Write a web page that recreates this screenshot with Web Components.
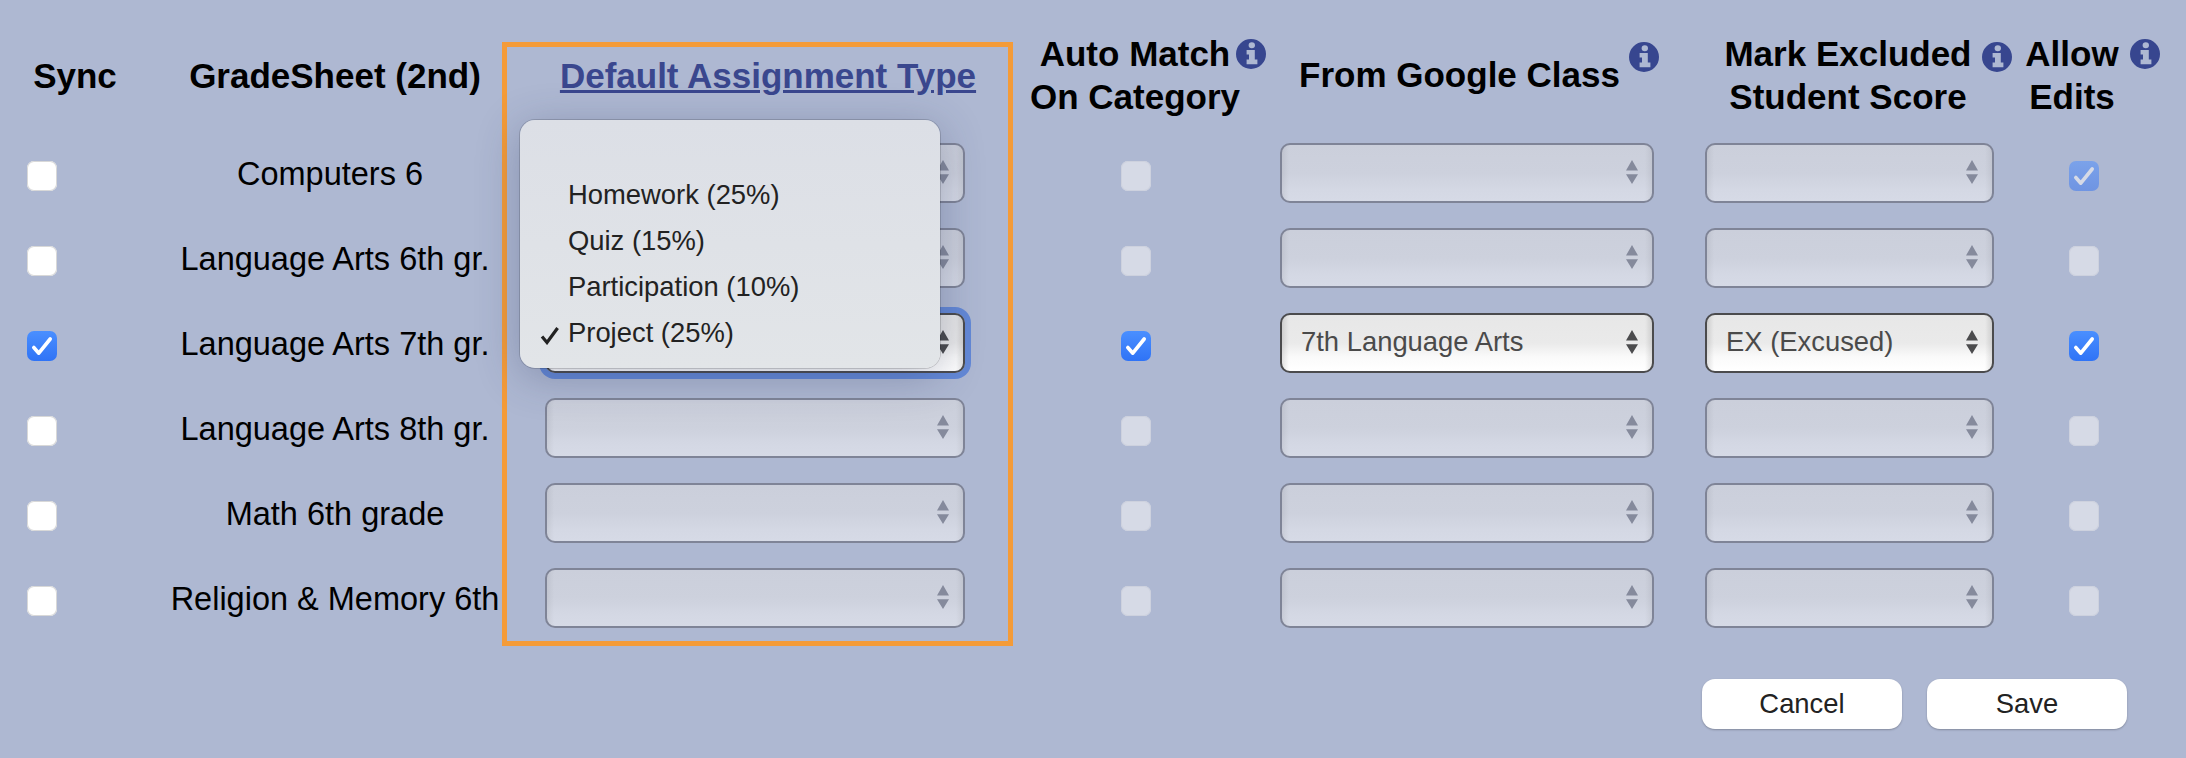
<!DOCTYPE html>
<html>
<head>
<meta charset="utf-8">
<title>Sync</title>
<style>
    html, body { margin: 0; height: 100%; background: #aeb8d2; }
    body { font-family: "Liberation Sans", Arial, sans-serif; overflow: hidden; }
</style>
</head>
<body>
<sync-form>
    <grade-column style="width:168px;--inset:27px">
        <column-head single style="width:150px">Sync</column-head>
        <grade-check></grade-check>
        <grade-check></grade-check>
        <grade-check checked></grade-check>
        <grade-check></grade-check>
        <grade-check></grade-check>
        <grade-check></grade-check>
    </grade-column>
    <grade-column style="width:334px">
        <column-head single>GradeSheet (2nd)</column-head>
        <row-name style="padding-right:10px">Computers 6</row-name>
        <row-name>Language Arts 6th gr.</row-name>
        <row-name>Language Arts 7th gr.</row-name>
        <row-name>Language Arts 8th gr.</row-name>
        <row-name>Math 6th grade</row-name>
        <row-name>Religion &amp; Memory 6th</row-name>
    </grade-column>
    <grade-column framed style="width:511px;--inset:38px;--select-w:420px">
        <column-head single link style="padding-left:21px">Default Assignment Type</column-head>
        <grade-select disabled></grade-select>
        <grade-select disabled></grade-select>
        <grade-select focused></grade-select>
        <grade-select disabled></grade-select>
        <grade-select disabled></grade-select>
        <grade-select disabled></grade-select>
        <type-menu>
            <menu-item></menu-item>
            <menu-item>Homework (25%)</menu-item>
            <menu-item>Quiz (15%)</menu-item>
            <menu-item>Participation (10%)</menu-item>
            <menu-item checked>Project (25%)</menu-item>
        </type-menu>
    </grade-column>
    <grade-column style="width:244px;--inset:108px">
        <column-head>Auto Match<info-dot style="--drop:-2.6px;--gap:6px"></info-dot><br>On Category</column-head>
        <grade-check disabled></grade-check>
        <grade-check disabled></grade-check>
        <grade-check checked></grade-check>
        <grade-check disabled></grade-check>
        <grade-check disabled></grade-check>
        <grade-check disabled></grade-check>
    </grade-column>
    <grade-column style="width:423px;--inset:23px;--select-w:374px">
        <column-head style="padding:9.5px 18px 0 0">From Google Class<info-dot style="--drop:15px;--gap:9px"></info-dot></column-head>
        <grade-select disabled></grade-select>
        <grade-select disabled></grade-select>
        <grade-select>7th Language Arts</grade-select>
        <grade-select disabled></grade-select>
        <grade-select disabled></grade-select>
        <grade-select disabled></grade-select>
    </grade-column>
    <grade-column style="width:336px;--inset:25px;--select-w:289px">
        <column-head>Mark Excluded<info-dot style="--drop:-5.6px;--gap:10px"></info-dot><br>Student Score</column-head>
        <grade-select disabled></grade-select>
        <grade-select disabled></grade-select>
        <grade-select>EX (Excused)</grade-select>
        <grade-select disabled></grade-select>
        <grade-select disabled></grade-select>
        <grade-select disabled></grade-select>
    </grade-column>
    <grade-column style="width:170px;--inset:53px">
        <column-head style="width:112px">Allow<info-dot style="--drop:-2.6px;--gap:11px"></info-dot><br>Edits</column-head>
        <grade-check checked disabled></grade-check>
        <grade-check disabled></grade-check>
        <grade-check checked></grade-check>
        <grade-check disabled></grade-check>
        <grade-check disabled></grade-check>
        <grade-check disabled></grade-check>
    </grade-column>
    <form-button slot="actions">Cancel</form-button>
    <form-button slot="actions">Save</form-button>
</sync-form>

<script>
class SyncForm extends HTMLElement {
    constructor() {
        super();
        const shadow = this.attachShadow({mode: 'open'});
        shadow.innerHTML = `
            <style>
                :host { display: block; padding-top: 32px; }
                .columns { display: flex; align-items: flex-start; }
                .actions {
                    display: flex;
                    justify-content: flex-end;
                    gap: 25px;
                    margin-top: 33px;
                    padding-right: 59px;
                }
            </style>
            <div class="columns"><slot></slot></div>
            <div class="actions"><slot name="actions"></slot></div>
        `;
    }
}

class GradeColumn extends HTMLElement {
    constructor() {
        super();
        const shadow = this.attachShadow({mode: 'open'});
        shadow.innerHTML = `
            <style>
                :host {
                    display: grid;
                    flex: none;
                    box-sizing: border-box;
                    position: relative;
                    grid-template-rows: 98.5px repeat(6, 85px);
                    align-items: center;
                }
                :host([framed]) {
                    margin-top: 10px;
                    border: 5px solid #f49b38;
                    grid-template-rows: 83.5px repeat(6, 85px);
                    --head-top: 6.5px;
                }
            </style>
            <slot></slot>
        `;
    }
}

class ColumnHead extends HTMLElement {
    constructor() {
        super();
        const shadow = this.attachShadow({mode: 'open'});
        shadow.innerHTML = `
            <style>
                :host {
                    display: block;
                    align-self: start;
                    box-sizing: border-box;
                    margin-top: var(--head-top, 0);
                    font-weight: bold;
                    font-size: 35px;
                    line-height: 43px;
                    text-align: center;
                    white-space: nowrap;
                    color: #000;
                }
                :host([single]) { padding-top: 21.5px; }
                :host([link]) {
                    padding-top: 0;
                    color: #3a478e;
                    text-decoration: underline;
                }
            </style>
            <slot></slot>
        `;
    }
}

class InfoDot extends HTMLElement {
    constructor() {
        super();
        const shadow = this.attachShadow({mode: 'open'});
        shadow.innerHTML = `
            <style>
                :host {
                    display: inline-block;
                    width: 30px;
                    height: 30px;
                    margin-left: var(--gap, 6px);
                    margin-right: calc(-30px - var(--gap, 6px));
                    vertical-align: var(--drop, 0);
                }
                svg { display: block; }
            </style>
            <svg width="30" height="30" viewBox="0 0 30 30">
                <path fill="#37468f" fill-rule="evenodd" d="M15 0a15 15 0 1 0 0 30a15 15 0 1 0 0-30zM15.8 3.2a3.2 3 0 1 1 0 6a3.2 3 0 1 1 0-6zM10.6 11h8.2v9.6h2.6v4.6H10.6v-4.6h2.4v-5h-2.4z"/>
            </svg>
        `;
    }
}

class RowName extends HTMLElement {
    constructor() {
        super();
        const shadow = this.attachShadow({mode: 'open'});
        shadow.innerHTML = `
            <style>
                :host {
                    display: block;
                    margin-top: 1px;
                    font-size: 32.5px;
                    line-height: 40px;
                    text-align: center;
                    white-space: nowrap;
                    color: #000;
                }
            </style>
            <slot></slot>
        `;
    }
}

class GradeCheck extends HTMLElement {
    constructor() {
        super();
        const shadow = this.attachShadow({mode: 'open'});
        shadow.innerHTML = `
            <style>
                :host {
                    display: block;
                    box-sizing: border-box;
                    width: 30px;
                    height: 30px;
                    margin: 6px 0 0 var(--inset, 0);
                    border-radius: 7px;
                    background: #fff;
                    box-shadow: inset 0 0 0 1px #d8d8d8;
                    filter: blur(.4px);
                }
                :host([disabled]) {
                    background: #d6dae6;
                    box-shadow: inset 0 0 0 1px #cdd1de;
                }
                :host([checked]) {
                    background: linear-gradient(#4a8fff, #2f73f6);
                    box-shadow: none;
                    filter: none;
                }
                :host([checked][disabled]) {
                    background: linear-gradient(#7ba2ea, #6f94e2);
                }
                svg { display: none; }
                :host([checked]) svg { display: block; }
                :host([checked][disabled]) path { stroke: #d6dae6; }
            </style>
            <svg width="30" height="30" viewBox="0 0 30 30">
                <path d="M6.8 16.5l5 5.7L23.2 8" fill="none" stroke="#fff" stroke-width="3.6" stroke-linecap="round" stroke-linejoin="round"/>
            </svg>
        `;
    }
}

class GradeSelect extends HTMLElement {
    constructor() {
        super();
        const shadow = this.attachShadow({mode: 'open'});
        shadow.innerHTML = `
            <style>
                :host {
                    display: flex;
                    align-items: center;
                    box-sizing: border-box;
                    width: var(--select-w, 300px);
                    height: 60px;
                    margin-left: var(--inset, 0);
                    padding: 0 14px 2px 19px;
                    border: 2px solid #4b4b4d;
                    border-radius: 10px;
                    font-size: 27.4px;
                    color: #4a4a4a;
                    white-space: nowrap;
                    --up: #4b4b4d;
                    background:
                        linear-gradient(90deg, #0000001c, #0000 7px, #0000 calc(100% - 7px), #0000001c),
                        linear-gradient(#e7e7e7, #eaeaea 50%, #fafafa 75%, #fff);
                }
                :host([disabled]) {
                    border-color: #7f8497;
                    --up: #858a9c;
                    background:
                        linear-gradient(90deg, #0000000f, #0000 7px, #0000 calc(100% - 7px), #0000000f),
                        linear-gradient(#cbcfdb, #cdd1dd 50%, #d4d8e4 80%, #d6dae6);
                }
                :host([focused]) { box-shadow: 0 0 0 6px #6388d6; }
                .text { flex: 1; }
                svg { display: block; flex: none; }
            </style>
            <span class="text"><slot></slot></span>
            <svg width="12" height="24" viewBox="0 0 12 24" fill="var(--up)">
                <path d="M6 0l6 10.5H0zM6 24l6-9.8H0z"/>
            </svg>
        `;
    }
}

class TypeMenu extends HTMLElement {
    constructor() {
        super();
        const shadow = this.attachShadow({mode: 'open'});
        shadow.innerHTML = `
            <style>
                :host {
                    display: block;
                    position: absolute;
                    left: 13px;
                    top: 72.5px;
                    z-index: 2;
                    box-sizing: border-box;
                    width: 420px;
                    height: 248px;
                    padding: 6px 0 12px;
                    border-radius: 15px;
                    background: linear-gradient(#dcdfe6, #e2e5e8);
                    box-shadow: 0 0 0 1px #00000026, 0 8px 44px #28325a4d;
                }
            </style>
            <slot></slot>
        `;
    }
}

class MenuItem extends HTMLElement {
    constructor() {
        super();
        const shadow = this.attachShadow({mode: 'open'});
        shadow.innerHTML = `
            <style>
                :host {
                    display: flex;
                    align-items: center;
                    height: 46px;
                    padding-left: 48px;
                    position: relative;
                    font-size: 27.4px;
                    color: #222;
                    white-space: nowrap;
                }
                svg {
                    display: none;
                    position: absolute;
                    left: 20px;
                    top: 16px;
                }
                :host([checked]) svg { display: block; }
            </style>
            <svg width="20" height="19" viewBox="0 0 20 19">
                <path d="M2 10.5l5 6L17.6 2" fill="none" stroke="#222" stroke-width="3.2"/>
            </svg>
            <slot></slot>
        `;
    }
}

class FormButton extends HTMLElement {
    constructor() {
        super();
        const shadow = this.attachShadow({mode: 'open'});
        shadow.innerHTML = `
            <style>
                :host {
                    display: flex;
                    align-items: center;
                    justify-content: center;
                    width: 200px;
                    height: 50px;
                    border-radius: 13px;
                    background: #fff;
                    box-shadow: 0 1px 2px #00000040;
                    font-size: 27.4px;
                    color: #222;
                }
            </style>
            <slot></slot>
        `;
    }
}

customElements.define('sync-form', SyncForm);
customElements.define('grade-column', GradeColumn);
customElements.define('column-head', ColumnHead);
customElements.define('info-dot', InfoDot);
customElements.define('row-name', RowName);
customElements.define('grade-check', GradeCheck);
customElements.define('grade-select', GradeSelect);
customElements.define('type-menu', TypeMenu);
customElements.define('menu-item', MenuItem);
customElements.define('form-button', FormButton);
</script>
</body>
</html>
